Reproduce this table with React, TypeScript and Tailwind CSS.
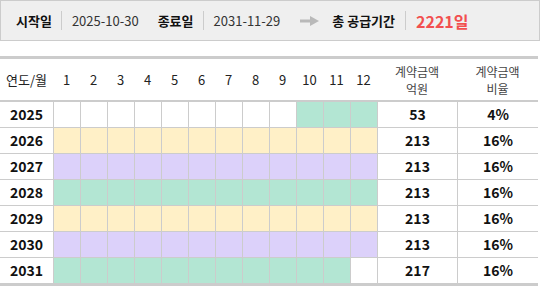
import React from "react";

const G = "bg-[#b3e6d3]";
const Y = "bg-[#fff0c7]";
const P = "bg-[#dcd1fa]";
const W = "bg-white";

const rows: { year: string; cells: string[]; amt: string; pct: string }[] = [
  { year: "2025", cells: [W, W, W, W, W, W, W, W, W, G, G, G], amt: "53", pct: "4%" },
  { year: "2026", cells: Array(12).fill(Y), amt: "213", pct: "16%" },
  { year: "2027", cells: Array(12).fill(P), amt: "213", pct: "16%" },
  { year: "2028", cells: Array(12).fill(G), amt: "213", pct: "16%" },
  { year: "2029", cells: Array(12).fill(Y), amt: "213", pct: "16%" },
  { year: "2030", cells: Array(12).fill(P), amt: "213", pct: "16%" },
  { year: "2031", cells: [G, G, G, G, G, G, G, G, G, G, G, W], amt: "217", pct: "16%" },
];

const font = { fontFamily: "'Noto Sans CJK KR', 'Noto Sans', sans-serif" };

function Sep() {
  return <div className="w-px h-[19px] bg-[#cccccc]" />;
}

export default function App() {
  return (
    <div className="w-[550px] h-[290px] bg-white text-[#222]" style={font}>
      <div className="w-[540px] h-[41px] border border-[#cccccc] bg-[#efefef] flex items-center">
        <span className="ml-[15px] text-[13px] font-bold text-[#111]">시작일</span>
        <div className="ml-[9px]"><Sep /></div>
        <span className="ml-[10px] text-[13px] text-[#333]">2025-10-30</span>
        <span className="ml-[19px] text-[13px] font-bold text-[#111]">종료일</span>
        <div className="ml-[9px]"><Sep /></div>
        <span className="ml-[10px] text-[13px] text-[#333]">2031-11-29</span>
        <svg className="ml-[20px]" width="19" height="10" viewBox="0 0 19 10">
          <rect x="0" y="3.5" width="11" height="3" fill="#b9b9b9" />
          <polygon points="10,0 19,5 10,10" fill="#b9b9b9" />
        </svg>
        <span className="ml-[13px] text-[13px] font-bold text-[#111]">총 공급기간</span>
        <div className="ml-[10px]"><Sep /></div>
        <span className="ml-[10px] text-[16px] font-bold text-[#f24f4f]">2221일</span>
      </div>

      <div className="mt-[15px] w-[538px] border-t-[3px] border-[#cccccc]">
        <div className="grid grid-cols-[53px_repeat(12,27px)_80px_81px] h-[43px] border-b-2 border-[#cccccc] items-center text-[13px] text-[#222]">
          <div className="text-center">연도/월</div>
          {Array.from({ length: 12 }, (_, i) => (
            <div key={i} className="text-center">{i + 1}</div>
          ))}
          <div className="text-center text-[12px] leading-[17px] text-[#444]">
            계약금액
            <br />
            억원
          </div>
          <div className="text-center text-[12px] leading-[17px] text-[#444]">
            계약금액
            <br />
            비율
          </div>
        </div>
        {rows.map((r, ri) => (
          <div
            key={r.year}
            className={
              "grid grid-cols-[53px_repeat(12,27px)_80px_81px] border-[#cccccc] " +
              (ri === rows.length - 1 ? "h-[28px] border-b-[3px]" : "h-[26px] border-b")
            }
          >
            <div className="flex items-center justify-center text-[14px] font-bold text-[#111]">{r.year}</div>
            {r.cells.map((c, i) => (
              <div key={i} className={"border-l border-[#cccccc] " + c} />
            ))}
            <div className="border-l border-[#cccccc] flex items-center justify-center text-[14px] font-bold text-[#111]">{r.amt}</div>
            <div className="border-l border-[#cccccc] flex items-center justify-center text-[14px] font-bold text-[#111]">{r.pct}</div>
          </div>
        ))}
      </div>
    </div>
  );
}
